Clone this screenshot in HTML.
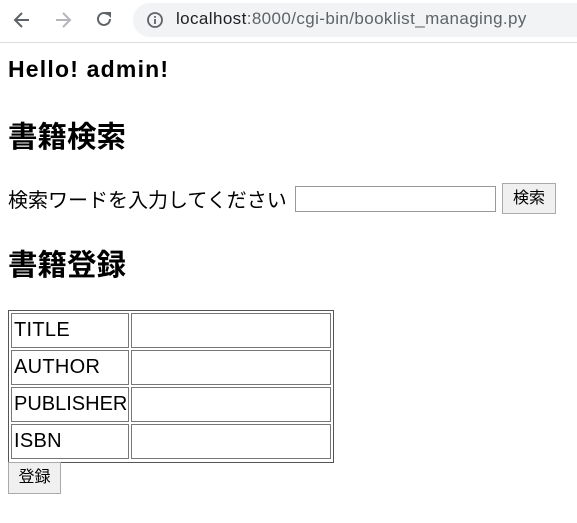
<!DOCTYPE html>
<html><head><meta charset="utf-8"><style>
body{margin:0;width:577px;height:523px;background:#fff;position:relative;overflow:hidden;font-family:"Liberation Sans","Noto Sans CJK JP",sans-serif;color:#000}
.a{position:absolute;white-space:nowrap}
.bar{position:absolute;left:0;top:0;width:577px;height:42px;background:#fff;border-bottom:1px solid #dadce0}
.pill{position:absolute;left:133px;top:3px;width:460px;height:34px;border-radius:17px;background:#f1f3f4}
.cell{position:absolute;border:1px solid #777;box-sizing:border-box;font-size:20px;line-height:32px;padding-left:2px;letter-spacing:0.3px}
</style></head><body>
<div class="bar">
<svg class="a" style="left:12px;top:10px" width="20" height="20" viewBox="0 0 20 20"><path d="M17 10H4M10 3L3 10l7 7" stroke="#5f6368" stroke-width="2" fill="none"/></svg>
<svg class="a" style="left:53px;top:10px" width="20" height="20" viewBox="0 0 20 20"><path d="M3 10h13M10 3l7 7-7 7" stroke="#b4b6b9" stroke-width="2" fill="none"/></svg>
<svg class="a" style="left:94px;top:9px" width="20" height="20" viewBox="0 0 20 20"><path d="M16 10a6 6 0 1 1-2-4.5" stroke="#5f6368" stroke-width="2" fill="none"/><path d="M11 3h6v6z" fill="#5f6368"/></svg>
<div class="pill"></div>
<svg class="a" style="left:146px;top:11px" width="18" height="18" viewBox="0 0 18 18"><circle cx="9" cy="9" r="7" stroke="#5f6368" stroke-width="1.8" fill="none"/><rect x="8.1" y="8" width="1.8" height="5" fill="#5f6368"/><rect x="8.1" y="5" width="1.8" height="1.8" fill="#5f6368"/></svg>
<div class="a" style="left:176px;top:9px;font-size:17px;letter-spacing:0.4px;color:#5f6368"><span style="color:#202124">localhost</span>:8000/cgi-bin/booklist_managing.py</div>
</div>
<div class="a" style="left:8px;top:56px;font-size:23px;letter-spacing:1.2px;font-weight:bold">Hello! admin!</div>
<div class="a" style="left:8px;top:114px;font-size:29.5px;font-weight:bold">書籍検索</div>
<div class="a" style="left:8px;top:184px;font-size:20px">検索ワードを入力してください</div>
<div class="a" style="left:295px;top:186px;width:201px;height:26px;border:1px solid #999;box-sizing:border-box"></div>
<div class="a" style="left:502px;top:183px;width:54px;height:31px;border:1px solid #aaa;box-sizing:border-box;background:#f0f0f0;font-size:16px;line-height:29px;text-align:center">検索</div>
<div class="a" style="left:8px;top:242px;font-size:29.5px;font-weight:bold">書籍登録</div>
<div class="a" style="left:8px;top:310px;width:326px;height:153px;border:1px solid #555;box-sizing:border-box"></div>
<div class="cell" style="left:11px;top:313px;width:118px;height:35px">TITLE</div>
<div class="cell" style="left:131px;top:313px;width:200px;height:35px"></div>
<div class="cell" style="left:11px;top:350px;width:118px;height:35px">AUTHOR</div>
<div class="cell" style="left:131px;top:350px;width:200px;height:35px"></div>
<div class="cell" style="left:11px;top:387px;width:118px;height:35px;letter-spacing:0">PUBLISHER</div>
<div class="cell" style="left:131px;top:387px;width:200px;height:35px"></div>
<div class="cell" style="left:11px;top:424px;width:118px;height:35px">ISBN</div>
<div class="cell" style="left:131px;top:424px;width:200px;height:35px"></div>
<div class="a" style="left:8px;top:462px;width:53px;height:32px;border:1px solid #aaa;box-sizing:border-box;background:#f0f0f0;font-size:16px;line-height:30px;text-align:center">登録</div>
</body></html>
